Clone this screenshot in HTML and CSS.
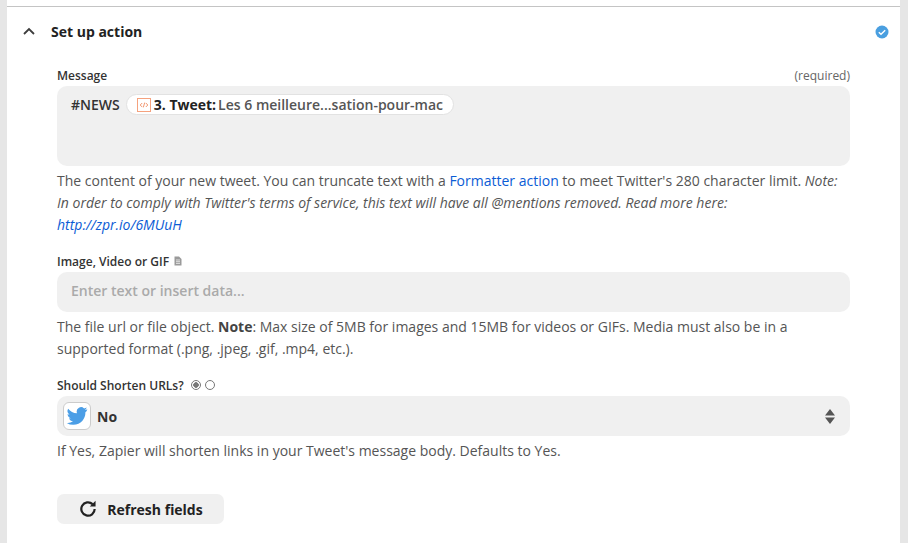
FILE: index.html
```html
<!DOCTYPE html>
<html lang="en">
<head>
<meta charset="utf-8">
<title>Set up action</title>
<link rel="stylesheet" href="styles.css">
</head>
<body>
<div class="panel">
  <header class="head">
    <svg class="chev" width="14" height="9" viewBox="0 0 14 9"><path d="M2 7l5-5 5 5" fill="none" stroke="#3d3d3d" stroke-width="1.8"/></svg>
    <h2 class="title">Set up action</h2>
    <svg class="check" width="14" height="14" viewBox="0 0 14 14"><circle cx="7" cy="7" r="6.5" fill="#4a9fe0"/><path d="M3.8 7.2l2.2 2 4.2-4" fill="none" stroke="#fff" stroke-width="1.4"/></svg>
  </header>
  <div class="form">
    <section class="field first">
      <div class="label-row"><span class="label">Message</span><span class="req">(required)</span></div>
      <div class="box box-msg">
        <span class="news">#NEWS</span>
        <span class="pill">
          <svg class="code" width="14" height="14" viewBox="0 0 14 14"><rect x=".5" y=".5" width="13" height="13" fill="#fff" stroke="#f5a27e"/><path d="M5.2 5L3.2 7l2 2M8.8 5l2 2-2 2M7.700 4.600L6.300 9.400" fill="none" stroke="#ee7b4a" stroke-width=".8"/></svg>
          <b class="pill-key">3. Tweet:</b><span class="pill-val">Les 6 meilleure...sation-pour-mac</span>
        </span>
      </div>
      <p class="help">The content of your new tweet. You can truncate text with a <a class="link" href="#">Formatter action</a> to meet Twitter's 280 character limit. <em>Note: In order to comply with Twitter's terms of service, this text will have all @mentions removed. Read more here: <a class="link" href="#">http://zpr.io/6MUuH</a></em></p>
    </section>
    <section class="field second">
      <div class="label-row"><span class="label">Image, Video or GIF
        <svg class="doc" width="8" height="10" viewBox="0 0 8 10"><path d="M.5.5h4.500l2.500 2.500v6.500h-7z" fill="#9a9a9a"/><path d="M2 4h4M2 5.700h4M2 7.400h4" stroke="#fff" stroke-width=".7"/></svg></span></div>
      <div class="box box-input"><span class="placeholder">Enter text or insert data...</span></div>
      <p class="help">The file url or file object. <b class="strong">Note</b>: Max size of 5MB for images and 15MB for videos or GIFs. Media must also be in a supported format (.png, .jpeg, .gif, .mp4, etc.).</p>
    </section>
    <section class="field third">
      <div class="label-row"><span class="label">Should Shorten URLs?
        <span class="radio radio-on"></span><span class="radio"></span></span></div>
      <div class="box box-select">
        <span class="tw"><svg width="22" height="18" viewBox="0 0 24 20"><path d="M23.500 2.400c-.85.38-1.770.63-2.700.74a4.700 4.700 0 0 0 2.070-2.600c-.9.540-1.920.93-3 1.140A4.730 4.730 0 0 0 11.800 6c0 .37.040.73.120 1.080C8 6.880 4.500 5 2.200 2a4.730 4.730 0 0 0 1.460 6.300c-.78-.02-1.500-.24-2.140-.6v.06c0 2.300 1.630 4.200 3.800 4.640-.7.190-1.430.2-2.140.08a4.730 4.730 0 0 0 4.420 3.280A9.500 9.500 0 0 1 .6 17.700 13.400 13.400 0 0 0 7.860 19.800c8.700 0 13.470-7.200 13.470-13.470l-.02-.6c.93-.67 1.730-1.500 2.190-3.330z" fill="#4b9ee6"/></svg></span>
        <span class="select-val">No</span>
        <svg class="updown" width="10" height="15" viewBox="0 0 10 15"><path d="M5 0l5 6.500H0zM5 15L0 8.500h10z" fill="#555"/></svg>
      </div>
      <p class="help">If Yes, Zapier will shorten links in your Tweet's message body. Defaults to Yes.</p>
    </section>
    <button class="refresh" type="button">
      <svg width="20" height="20" viewBox="0 0 18 18"><path d="M15 9a6 6 0 1 1-1.900-4.400" fill="none" stroke="#222" stroke-width="2"/><path d="M15.800 1.500v5.200h-5.200z" fill="#222"/></svg>
      <span>Refresh fields</span>
    </button>
  </div>
</div>
</body>
</html>
```

FILE: styles.css
```css
* { box-sizing: border-box; }
html, body { margin: 0; height: 100%; }
body {
  background: #fff;
  font-family: "Open Sans", sans-serif;
  color: #444;
  overflow: hidden;
}
.panel {
  width: 908px;
  height: 543px;
  margin: 0;
  padding-top: 6px;
  border-left: 7px solid #e6e6e6;
  border-right: 8px solid #e6e6e6;
  background: #fff;
}
.head {
  display: flex;
  align-items: center;
  height: 50px;
  border-top: 1px solid #c4c4c4;
  padding: 0 11px 0 15px;
}
.chev { flex: none; margin-right: 15px; }
.title { margin: 0; font-size: 14px; font-weight: 700; color: #222; flex: 1; }
.check { flex: none; }
.form { padding: 0 50px; margin-top: 10px; }
.label-row { display: flex; justify-content: space-between; align-items: center; height: 18px; }
.label { font-size: 12px; font-weight: 600; color: #333; }
.req { font-size: 12px; color: #666; }
.box {
  background-color: #f0f0f0;
  background-image: radial-gradient(#e6e6e6 .6px, transparent .7px);
  background-size: 4px 4px;
  border-radius: 10px;
  font-size: 14px;
  color: #333;
}
.box-msg { height: 80px; margin-top: 2px; padding: 8px 14px; display: flex; align-items: flex-start; gap: 6px; }
.news { font-weight: 600; line-height: 21px; }
.pill {
  display: inline-flex;
  align-items: center;
  height: 21px;
  padding: 0 10px;
  background: #fff;
  border: 1px solid #e2e2e2;
  border-radius: 11px;
  gap: 3px;
  white-space: nowrap;
}
.code { flex: none; }
.pill-key { color: #222; font-weight: 700; }
.pill-val { font-weight: 600; color: #555; margin-left: -1px; }
.help { margin: 0; font-size: 14px; line-height: 22px; color: #555; margin-top: 4px; }
.link { color: #0b5cd5; text-decoration: none; }
.strong { font-weight: 700; color: #444; }
.second { margin-top: 16px; }
.box-input { height: 40px; margin-top: 2px; padding: 0 14px 4px; display: flex; align-items: center; }
.placeholder { color: #aaa; font-weight: 600; }
.third { margin-top: 16px; }
.radio {
  display: inline-block;
  width: 10px;
  height: 10px;
  margin-left: 4px;
  border: 1px solid #777;
  border-radius: 50%;
  vertical-align: 0;
  background: #fff;
}
.radio-on { background: radial-gradient(#777 2.500px, #fff 3px); }
.doc { margin-left: 2px; }
.box-select { height: 40px; margin-top: 2px; padding: 0 15px 0 6px; display: flex; align-items: center; }
.tw {
  width: 28px;
  height: 28px;
  flex: none;
  background: #fff;
  border: 1px solid #ccc;
  border-radius: 6px;
  display: flex;
  align-items: center;
  justify-content: center;
}
.select-val { flex: 1; margin-left: 6px; font-weight: 700; color: #333; }
.updown { flex: none; }
.refresh {
  display: flex;
  align-items: center;
  justify-content: center;
  gap: 9px;
  width: 167px;
  height: 30px;
  margin-top: 32px;
  border: 0;
  border-radius: 7px;
  background-color: #f0f0f0;
  background-image: radial-gradient(#e6e6e6 .6px, transparent .7px);
  background-size: 4px 4px;
  font-family: inherit;
  font-size: 14px;
  font-weight: 700;
  color: #222;
}
```
